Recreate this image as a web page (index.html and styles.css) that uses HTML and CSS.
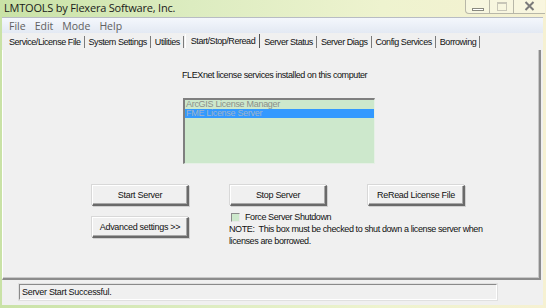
FILE: index.html
```html
<!DOCTYPE html>
<html>
<head>
<meta charset="utf-8">
<link rel="stylesheet" href="styles.css">
</head>
<body>
<div class="window">
  <div class="titlebar">
    <span class="title">LMTOOLS by Flexera Software, Inc.</span>
    <div class="controls">
      <div class="ctl ctl-min"><span class="bar"></span></div>
      <div class="ctl ctl-max"><span class="box"></span></div>
      <div class="ctl ctl-close">
        <svg width="11" height="10" viewBox="0 0 11 10"><path d="M1.5 1 L9.5 9 M9.5 1 L1.5 9" stroke="#7a7a7a" stroke-width="2" fill="none"/></svg>
      </div>
    </div>
  </div>
  <div class="client">
    <div class="menubar">
      <span class="menu">File</span>
      <span class="menu">Edit</span>
      <span class="menu">Mode</span>
      <span class="menu">Help</span>
    </div>
    <div class="tabs">
      <span class="tab">Service/License File</span>
      <span class="tab">System Settings</span>
      <span class="tab">Utilities</span>
      <span class="tab active">Start/Stop/Reread</span>
      <span class="tab">Server Status</span>
      <span class="tab">Server Diags</span>
      <span class="tab">Config Services</span>
      <span class="tab">Borrowing</span>
    </div>
    <div class="panel">
      <div class="caption">FLEXnet license services installed on this computer</div>
      <div class="listbox">
        <div class="item">ArcGIS License Manager</div>
        <div class="item selected">FME License Server</div>
      </div>
      <div class="row row1">
        <div class="btn">Start Server</div>
        <div class="btn">Stop Server</div>
        <div class="btn">ReRead License File</div>
      </div>
      <div class="row row2">
        <div class="btn">Advanced settings &gt;&gt;</div>
        <div class="opts">
          <label class="check"><span class="box"></span>Force Server Shutdown</label>
          <p class="note">NOTE:&nbsp; This box must be checked to shut down a license server when<br>licenses are borrowed.</p>
        </div>
      </div>
    </div>
    <div class="statusbar">
      <div class="status">Server Start Successful.</div>
    </div>
  </div>
</div>
</body>
</html>
```
FILE: styles.css
```css
html, body {
  margin: 0;
  padding: 0;
}
body {
  width: 546px;
  height: 308px;
  overflow: hidden;
  font-family: "Liberation Sans", Arial, sans-serif;
}
.window {
  width: 546px;
  height: 308px;
  box-sizing: border-box;
  padding: 0 3px 3px 2px;
  display: flex;
  flex-direction: column;
  background: linear-gradient(90deg, #c9e2a6 0%, #dcecc0 35%, #eef3cf 70%, #f6f1d2 100%);
}
.titlebar {
  height: 17px;
  flex: none;
  position: relative;
  display: flex;
  align-items: center;
}
.title {
  font-family: "Open Sans", "Noto Sans", sans-serif;
  font-size: 11px;
  letter-spacing: -0.2px;
  color: #1a1a1a;
  padding-left: 2px;
  margin-top: -3px;
}
.controls {
  position: absolute;
  top: -1px;
  right: -2px;
  display: flex;
}
.ctl {
  height: 15px;
  border: 1px solid #b8b7a8;
  border-top: none;
  box-sizing: border-box;
  display: flex;
  align-items: center;
  justify-content: center;
  background: rgba(255, 255, 250, 0.35);
}
.ctl-min {
  width: 25px;
  border-radius: 0 0 0 4px;
}
.ctl-max {
  width: 24px;
  border-left: none;
}
.ctl-close {
  width: 31px;
  border-left: none;
  border-right: none;
}
.ctl-min .bar {
  width: 12px;
  height: 3px;
  margin-top: 6px;
  border: 1px solid #8a8a80;
  box-sizing: border-box;
  background: #fff;
}
.ctl-max .box {
  width: 10px;
  height: 9px;
  border: 1px solid #c8c6b8;
  box-sizing: border-box;
  border-top-width: 2px;
}
.client {
  flex: 1;
  display: flex;
  flex-direction: column;
  background: #f0f0f0;
  border-top: 1px solid #b8bcc4;
}
.menubar {
  height: 15px;
  flex: none;
  display: flex;
  align-items: center;
  background: linear-gradient(#f4f7fc, #e3e9f3);
  font-family: "Open Sans", "Noto Sans", sans-serif;
  font-size: 10.5px;
  color: #606060;
  padding-left: 4px;
}
.menu {
  padding: 0 3px;
  margin-right: 3px;
}
.tabs {
  height: 17px;
  flex: none;
  display: flex;
  align-items: center;
  padding-left: 4px;
  font-size: 9px;
  letter-spacing: -0.45px;
  color: #111;
}
.tab {
  padding: 0 3px 0 3px;
  margin-right: 1px;
  border-right: 1px solid #7a7a7a;
  line-height: 12px;
  margin-top: 1px;
}
.tab.active {
  padding: 0 4px 0 5px;
  margin-top: -1px;
  line-height: 14px;
  border-left: 1px solid #ffffff;
  border-right: 1px solid #555;
}
.panel {
  height: 230px;
  flex: none;
  box-sizing: border-box;
  margin-right: 2px;
  border-left: 1px solid #ffffff;
  border-right: 2px solid #8c8c8c;
  border-bottom: 2px solid #8c8c8c;
  box-shadow: inset -1px -1px 0 #c8c8c8;
  display: flex;
  flex-direction: column;
  font-size: 9px;
  letter-spacing: -0.4px;
  color: #111;
}
.caption {
  margin-top: 20px;
  padding-left: 179px;
  line-height: 11px;
}
.listbox {
  margin-top: 17px;
  margin-left: 180px;
  width: 192px;
  height: 66px;
  box-sizing: border-box;
  background: #cde8cc;
  border-top: 2px solid #7f7f7f;
  border-left: 2px solid #7f7f7f;
  border-right: 1px solid #e6f0e6;
  border-bottom: 1px solid #e6f0e6;
  color: #8a8f8a;
  font-size: 9px;
  letter-spacing: -0.3px;
}
.item {
  height: 9px;
  line-height: 9px;
  padding-left: 1px;
}
.selected {
  background: #3399ff;
  color: #a0b4c8;
}
.row {
  display: flex;
  align-items: flex-start;
  padding-left: 89px;
  gap: 41px;
}
.row1 {
  margin-top: 21px;
}
.row2 {
  margin-top: 6px;
  gap: 40px;
}
.btn {
  width: 97px;
  height: 21px;
  box-sizing: border-box;
  background: #f0f0f0;
  border: 1px solid #ffffff;
  border-right: 2px solid #6a6a6a;
  border-bottom: 2px solid #6a6a6a;
  box-shadow: inset -1px -1px 0 #a8a8a8, 1px 1px 0 #d0d0d0, -1px -1px 0 #d8d8d8;
  display: flex;
  align-items: center;
  justify-content: center;
  font-size: 9px;
  letter-spacing: -0.3px;
}
.row2 > .btn {
  margin-top: 5px;
}
.opts {
  display: flex;
  flex-direction: column;
}
.check {
  display: flex;
  align-items: center;
  margin-left: 2px;
  height: 10px;
}
.check .box {
  width: 9px;
  height: 9px;
  box-sizing: border-box;
  background: #cde8cc;
  border-top: 1px solid #8a8a8a;
  border-left: 1px solid #8a8a8a;
  border-right: 1px solid #e8e8e8;
  border-bottom: 1px solid #e8e8e8;
  margin-right: 5px;
}
.note {
  margin: 0;
  padding-top: 1px;
  line-height: 12px;
}
.statusbar {
  flex: 1;
  display: flex;
  align-items: flex-start;
  padding: 4px 0 0 17px;
}
.status {
  width: 478px;
  height: 16px;
  box-sizing: border-box;
  border-top: 1px solid #8a8a8a;
  border-left: 1px solid #8a8a8a;
  border-right: 1px solid #ffffff;
  border-bottom: 1px solid #ffffff;
  box-shadow: 0 0 0 1px #e0e0e0;
  font-size: 9px;
  letter-spacing: -0.3px;
  color: #111;
  padding: 2px 0 0 2px;
  line-height: 11px;
}
```
